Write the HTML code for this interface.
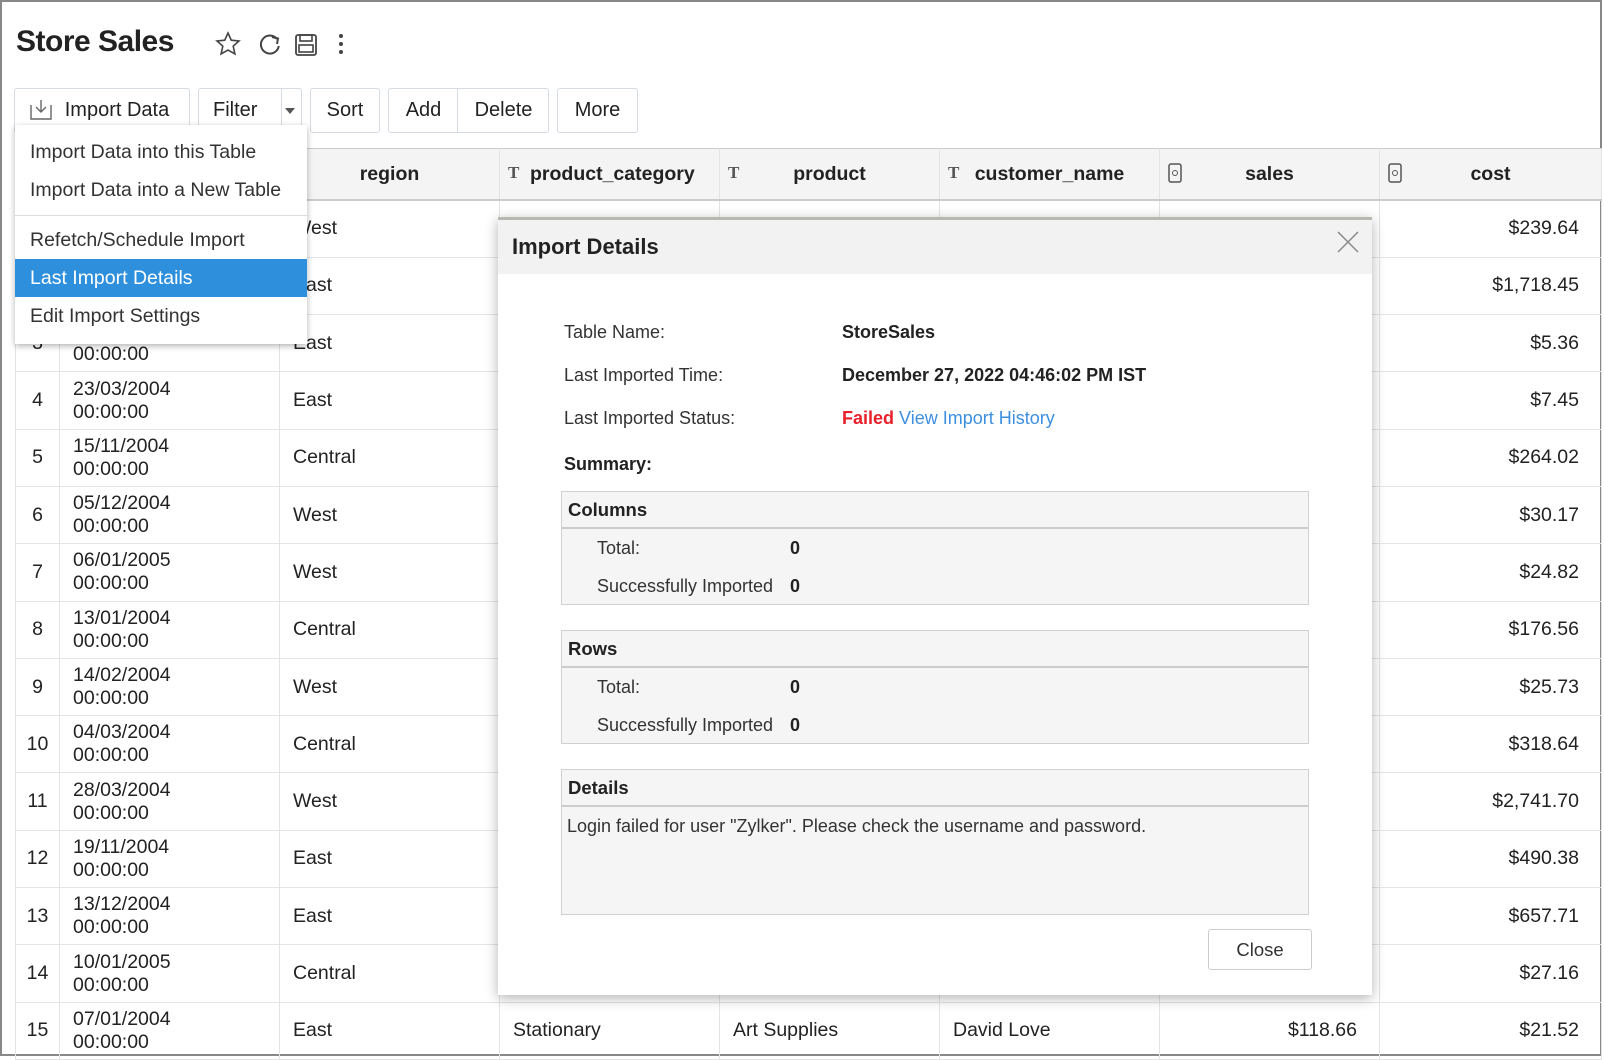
<!DOCTYPE html>
<html><head><meta charset="utf-8"><style>
*{box-sizing:border-box;margin:0;padding:0}
body{width:1604px;height:1056px;background:#fff;font-family:"Liberation Sans",sans-serif;color:#222;position:relative;overflow:hidden}
.frame{position:absolute;left:0;top:0;width:1602px;height:1056px;border:2px solid #888;}
.a{position:absolute}
.btn{position:absolute;top:88px;height:45px;border:1px solid #d6dbe3;border-radius:3px;font-size:20px;line-height:43px;text-align:center;background:#fff}
table{position:absolute;left:15px;top:148px;border-collapse:collapse;font-size:19.5px}
td,th{border:1px solid #e4e4e4;height:57.3px;padding:0 13px;vertical-align:middle}
th{background:#f4f4f4;height:51.5px;font-weight:bold;border-top:1px solid #ccc;border-bottom:2px solid #ccc;position:relative}
td.n{text-align:center;padding:0}
td.d{line-height:23px}
td.r{text-align:right;padding-right:22px}
.T{position:absolute;left:8px;top:14px;font-family:"Liberation Serif",serif;font-weight:bold;font-size:17px;color:#555}
.menu{position:absolute;left:15px;top:125px;width:292px;height:219px;background:#fff;box-shadow:0 2px 6px rgba(0,0,0,.3);font-size:19.5px;color:#333}
.menu div{position:absolute;left:0;width:100%;padding-left:15px;height:38px;line-height:38px}
.modal{position:absolute;left:498px;top:217px;width:874px;height:778px;background:#fff;border-top:3px solid #b8b8b0;box-shadow:0 3px 12px rgba(0,0,0,.3)}
.mh{height:54px;background:#f2f2f2;font-size:22px;font-weight:bold;line-height:54px;padding-left:14px}
.lbl{position:absolute;font-size:18px;color:#333}
.val{position:absolute;font-size:18px;font-weight:bold}
.box{position:absolute;left:63px;width:748px;border:1px solid #d0d0d0;background:#f5f5f5}
.box .bh{height:37px;border-bottom:2px solid #ccc;font-weight:bold;font-size:18.5px;line-height:36px;padding-left:6px}
</style></head><body>
<div class="frame"></div>
<div class="a" style="left:16px;top:25px;font-size:30px;font-weight:bold;color:#222;letter-spacing:-0.5px">Store Sales</div>
<svg class="a" style="left:214px;top:30px" width="145" height="30" viewBox="0 0 145 30">
<path d="M14 3l3.3 7.2 7.7.8-5.8 5.2 1.7 7.7L14 20l-6.9 3.9 1.7-7.7L3 11l7.7-.8z" fill="none" stroke="#444" stroke-width="1.6"/>
<path d="M63 9a9 9 0 1 0 1.8 7" fill="none" stroke="#444" stroke-width="2"/><path d="M58 7l6 1.5-1 5.5" fill="none" stroke="#444" stroke-width="2"/>
<rect x="82" y="5" width="20" height="20" rx="2" fill="none" stroke="#444" stroke-width="1.8"/><rect x="86" y="5" width="12" height="6" fill="none" stroke="#444" stroke-width="1.6"/><rect x="85" y="15" width="14" height="7" fill="none" stroke="#444" stroke-width="1.6"/>
<circle cx="127" cy="6" r="2" fill="#444"/><circle cx="127" cy="14" r="2" fill="#444"/><circle cx="127" cy="22" r="2" fill="#444"/>
</svg>
<div class="btn" style="left:14px;width:176px;padding-left:30px">Import Data</div>
<svg class="a" style="left:29px;top:99px" width="24" height="22"><path d="M2 6v14h20V6M12 1v12M7 8l5 5 5-5" fill="none" stroke="#666" stroke-width="1.4"/></svg>
<div class="btn" style="left:198px;width:104px;text-align:left;padding-left:14px">Filter<span style="position:absolute;left:82px;top:0;height:43px;border-left:1px solid #d6dbe3;width:22px"></span><span style="position:absolute;left:86px;top:19px;border:5px solid transparent;border-top:6px solid #555"></span></div>
<div class="btn" style="left:310px;width:70px">Sort</div>
<div class="btn" style="left:388px;width:161px;text-align:left"><span style="position:absolute;left:0;width:69px;text-align:center">Add</span><span style="position:absolute;left:68px;top:0;height:43px;border-left:1px solid #d6dbe3"></span><span style="position:absolute;left:69px;width:91px;text-align:center">Delete</span></div>
<div class="btn" style="left:557px;width:81px">More</div>

<table>
<tr><th style="width:44px"></th><th style="width:220px"></th><th style="width:220px">region</th><th style="width:220px;text-align:left;padding-left:30px"><span class="T">T</span>product_category</th><th style="width:220px"><span class="T">T</span>product</th><th style="width:220px"><span class="T">T</span>customer_name</th><th style="width:220px"><svg class="a" style="left:8px;top:14px" width="14" height="20"><rect x="1" y="1" width="12" height="18" rx="2" fill="none" stroke="#555" stroke-width="1.5"/><circle cx="7" cy="10" r="2.5" fill="none" stroke="#555"/></svg>sales</th><th style="width:222px"><svg class="a" style="left:8px;top:14px" width="14" height="20"><rect x="1" y="1" width="12" height="18" rx="2" fill="none" stroke="#555" stroke-width="1.5"/><circle cx="7" cy="10" r="2.5" fill="none" stroke="#555"/></svg>cost</th></tr>
<tr><td class="n">1</td><td class="d">10/10/2004<br>00:00:00</td><td>West</td><td></td><td></td><td></td><td></td><td class="r">$239.64</td></tr>
<tr><td class="n">2</td><td class="d">12/10/2004<br>00:00:00</td><td>East</td><td></td><td></td><td></td><td></td><td class="r">$1,718.45</td></tr>
<tr><td class="n">3</td><td class="d">14/12/2004<br>00:00:00</td><td>East</td><td></td><td></td><td></td><td></td><td class="r">$5.36</td></tr>
<tr><td class="n">4</td><td class="d">23/03/2004<br>00:00:00</td><td>East</td><td></td><td></td><td></td><td></td><td class="r">$7.45</td></tr>
<tr><td class="n">5</td><td class="d">15/11/2004<br>00:00:00</td><td>Central</td><td></td><td></td><td></td><td></td><td class="r">$264.02</td></tr>
<tr><td class="n">6</td><td class="d">05/12/2004<br>00:00:00</td><td>West</td><td></td><td></td><td></td><td></td><td class="r">$30.17</td></tr>
<tr><td class="n">7</td><td class="d">06/01/2005<br>00:00:00</td><td>West</td><td></td><td></td><td></td><td></td><td class="r">$24.82</td></tr>
<tr><td class="n">8</td><td class="d">13/01/2004<br>00:00:00</td><td>Central</td><td></td><td></td><td></td><td></td><td class="r">$176.56</td></tr>
<tr><td class="n">9</td><td class="d">14/02/2004<br>00:00:00</td><td>West</td><td></td><td></td><td></td><td></td><td class="r">$25.73</td></tr>
<tr><td class="n">10</td><td class="d">04/03/2004<br>00:00:00</td><td>Central</td><td></td><td></td><td></td><td></td><td class="r">$318.64</td></tr>
<tr><td class="n">11</td><td class="d">28/03/2004<br>00:00:00</td><td>West</td><td></td><td></td><td></td><td></td><td class="r">$2,741.70</td></tr>
<tr><td class="n">12</td><td class="d">19/11/2004<br>00:00:00</td><td>East</td><td></td><td></td><td></td><td></td><td class="r">$490.38</td></tr>
<tr><td class="n">13</td><td class="d">13/12/2004<br>00:00:00</td><td>East</td><td></td><td></td><td></td><td></td><td class="r">$657.71</td></tr>
<tr><td class="n">14</td><td class="d">10/01/2005<br>00:00:00</td><td>Central</td><td></td><td></td><td></td><td></td><td class="r">$27.16</td></tr>
<tr><td class="n">15</td><td class="d">07/01/2004<br>00:00:00</td><td>East</td><td>Stationary</td><td>Art Supplies</td><td>David Love</td><td class="r">$118.66</td><td class="r">$21.52</td></tr>
</table>

<div class="menu">
<div style="top:8px">Import Data into this Table</div>
<div style="top:46px">Import Data into a New Table</div>
<div style="top:90px;height:1px;padding:0;border-top:1px solid #ddd"></div>
<div style="top:96px">Refetch/Schedule Import</div>
<div style="top:134px;background:#2e8fdc;color:#fff">Last Import Details</div>
<div style="top:172px">Edit Import Settings</div>
</div>

<div class="modal">
<div class="mh">Import Details</div>
<svg class="a" style="left:838px;top:10px" width="24" height="24"><path d="M2 2l20 20M22 2L2 22" stroke="#888" stroke-width="1.5"/></svg>
<div class="lbl" style="left:66px;top:102px">Table Name:</div><div class="val" style="left:344px;top:102px">StoreSales</div>
<div class="lbl" style="left:66px;top:145px">Last Imported Time:</div><div class="val" style="left:344px;top:145px">December 27, 2022 04:46:02 PM IST</div>
<div class="lbl" style="left:66px;top:188px">Last Imported Status:</div><div class="val" style="left:344px;top:188px;color:#e8202a">Failed <span style="color:#3d8fe0;font-weight:normal">View Import History</span></div>
<div class="val" style="left:66px;top:234px">Summary:</div>
<div class="box" style="top:271px;height:114px"><div class="bh">Columns</div>
<div class="lbl" style="left:35px;top:46px">Total:</div><div class="val" style="left:228px;top:46px">0</div>
<div class="lbl" style="left:35px;top:84px">Successfully Imported</div><div class="val" style="left:228px;top:84px">0</div></div>
<div class="box" style="top:410px;height:114px"><div class="bh">Rows</div>
<div class="lbl" style="left:35px;top:46px">Total:</div><div class="val" style="left:228px;top:46px">0</div>
<div class="lbl" style="left:35px;top:84px">Successfully Imported</div><div class="val" style="left:228px;top:84px">0</div></div>
<div class="box" style="top:549px;height:146px"><div class="bh">Details</div>
<div class="lbl" style="left:5px;top:46px">Login failed for user "Zylker". Please check the username and password.</div></div>
<div class="a" style="left:710px;top:709px;width:104px;height:41px;border:1px solid #ccc;border-radius:3px;font-size:18.5px;line-height:39px;text-align:center;color:#333">Close</div>
</div>
</body></html>
